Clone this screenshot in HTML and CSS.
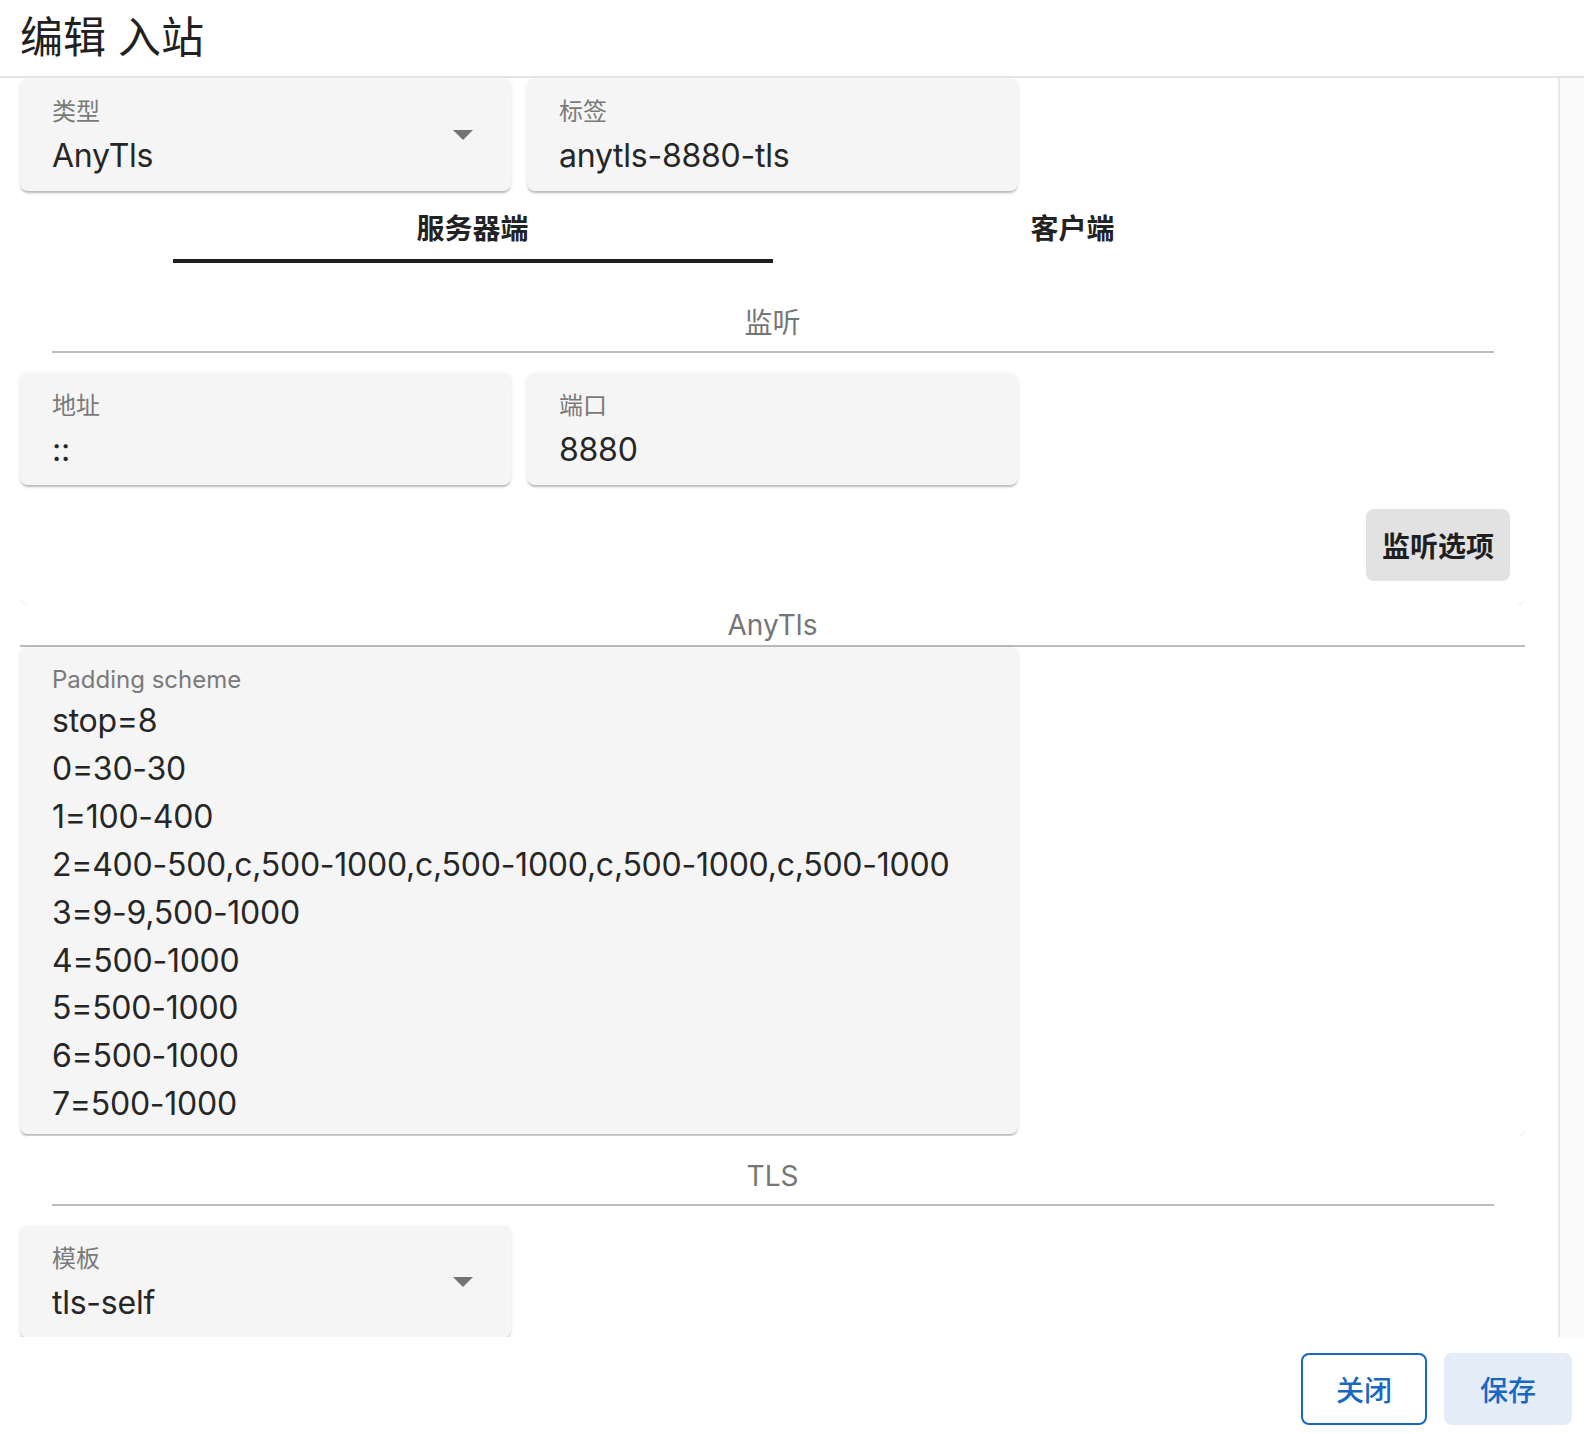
FILE: index.html
```html
<!DOCTYPE html>
<html lang="zh-CN">
<head>
  <meta charset="UTF-8">
  <meta name="viewport" content="width=device-width, initial-scale=1.0">
  <title>编辑 入站</title>
  <link rel="stylesheet" href="styles.css">
</head>
<body>
  <div class="dialog">
    <header class="dialog-title">编辑 入站</header>

    <div class="dialog-body">
      <div class="scroll">
        <div class="row">
          <div class="field select">
            <div class="field-text">
              <span class="label">类型</span>
              <span class="value">AnyTls</span>
            </div>
            <span class="arrow"></span>
          </div>
          <div class="field">
            <span class="label">标签</span>
            <span class="value">anytls-8880-tls</span>
          </div>
        </div>

        <div class="tabs">
          <div class="tab active">服务器端</div>
          <div class="tab">客户端</div>
        </div>

        <section class="card">
          <div class="card-title">监听</div>
          <div class="card-divider"></div>
          <div class="row spaced">
            <div class="field">
              <span class="label">地址</span>
              <span class="value">::</span>
            </div>
            <div class="field">
              <span class="label">端口</span>
              <span class="value">8880</span>
            </div>
          </div>
          <div class="card-actions">
            <button class="btn-tonal">监听选项</button>
          </div>
        </section>

        <section class="card tight">
          <div class="card-title">AnyTls</div>
          <div class="card-divider full"></div>
          <div class="field textarea">
            <span class="label">Padding scheme</span>
            <span class="value">stop=8</span>
            <span class="value">0=30-30</span>
            <span class="value">1=100-400</span>
            <span class="value">2=400-500,c,500-1000,c,500-1000,c,500-1000,c,500-1000</span>
            <span class="value">3=9-9,500-1000</span>
            <span class="value">4=500-1000</span>
            <span class="value">5=500-1000</span>
            <span class="value">6=500-1000</span>
            <span class="value">7=500-1000</span>
          </div>
        </section>

        <section class="card">
          <div class="card-title">TLS</div>
          <div class="card-divider"></div>
          <div class="row spaced">
            <div class="field select">
              <div class="field-text">
                <span class="label">模板</span>
                <span class="value">tls-self</span>
              </div>
              <span class="arrow"></span>
            </div>
          </div>
        </section>
      </div>
      <div class="scrollbar"></div>
    </div>

    <footer class="dialog-actions">
      <button class="btn-outline">关闭</button>
      <button class="btn-save">保存</button>
    </footer>
  </div>
</body>
</html>
```

FILE: styles.css
```css
* {
  margin: 0;
  padding: 0;
  box-sizing: border-box;
}

body {
  font-family: Inter, "Noto Sans CJK SC", sans-serif;
  background: #ffffff;
  color: #212121;
}

.dialog {
  display: flex;
  flex-direction: column;
  height: 100vh;
}

.dialog-title {
  height: 78px;
  padding-left: 20px;
  font-size: 43px;
  line-height: 74px;
  font-weight: 400;
  border-bottom: 2px solid #e3e3e3;
}

.dialog-body {
  flex: 1;
  display: flex;
  overflow: hidden;
}

.scroll {
  flex: 1;
  padding: 1px 33px 0 20px;
  overflow: hidden;
}

.scrollbar {
  width: 26px;
  background: #fafafa;
  border-left: 2px solid #e8e8e8;
}

.row {
  display: grid;
  grid-template-columns: 491px 491px;
  gap: 16px;
}

.row.spaced {
  margin-top: 20px;
}

.field {
  display: flex;
  flex-direction: column;
  height: 112px;
  padding: 19px 32px 0;
  background: #f5f5f5;
  border-radius: 8px;
  box-shadow: 0 3px 2px -1px rgba(0, 0, 0, 0.22), 0 1px 4px rgba(0, 0, 0, 0.1);
}

.field.select {
  flex-direction: row;
  align-items: center;
  padding: 0 38px 0 32px;
}

.field-text {
  flex: 1;
  display: flex;
  flex-direction: column;
  padding-top: 19px;
  align-self: flex-start;
}

.label {
  font-size: 24px;
  line-height: 28px;
  color: #7a7a7a;
  margin-bottom: 6px;
}

.value {
  font-size: 32px;
  line-height: 48px;
  letter-spacing: -0.25px;
  color: #262626;
}

.textarea {
  height: auto;
  padding-bottom: 6px;
  width: 998px;
}

.textarea .label {
  margin-bottom: 3px;
}

.textarea .value {
  line-height: 47.9px;
}

.arrow {
  width: 0;
  height: 0;
  border-left: 10px solid transparent;
  border-right: 10px solid transparent;
  border-top: 10px solid #737373;
}

.tabs {
  display: flex;
  justify-content: center;
}

.tab {
  width: 600px;
  height: 72px;
  padding-top: 8px;
  line-height: 60px;
  text-align: center;
  font-size: 28px;
  font-weight: 700;
  color: #222;
  border-bottom: 4px solid transparent;
}

.tab.active {
  border-bottom-color: #1e1e1e;
}

.card {
  margin-top: 20px;
  padding: 20px 0 23px;
  background: #ffffff;
  border-radius: 8px;
  box-shadow: 0 2px 2px -1px rgba(0, 0, 0, 0.12);
}

.card.tight {
  margin-top: 0;
  padding: 1px 0 2px;
}

.card + .card {
  margin-top: 0;
}

.card-title {
  font-size: 28px;
  line-height: 40px;
  text-align: center;
  color: #767676;
}

.card-divider {
  height: 2px;
  margin: 8px 31px 0 32px;
  background: #bcbcbc;
}

.card-divider.full {
  margin: 0;
}

.card-actions {
  display: flex;
  justify-content: flex-end;
  margin-top: 24px;
  padding-right: 15px;
}

button {
  font-family: Inter, "Noto Sans CJK SC", sans-serif;
  font-size: 28px;
  border: none;
  border-radius: 8px;
  cursor: pointer;
}

.btn-tonal {
  height: 72px;
  padding: 0 16px;
  font-weight: 700;
  color: #1f1f1f;
  background: #e2e2e2;
}

.dialog-actions {
  display: flex;
  justify-content: flex-end;
  gap: 17px;
  height: 97px;
  padding: 16px 12px 0 0;
}

.btn-outline {
  height: 72px;
  padding: 0 33px;
  font-weight: 500;
  color: #1867c0;
  background: #ffffff;
  border: 2px solid #1867c0;
}

.btn-save {
  height: 72px;
  padding: 0 36px;
  font-weight: 500;
  color: #1867c0;
  background: #e3ecf7;
}
```
